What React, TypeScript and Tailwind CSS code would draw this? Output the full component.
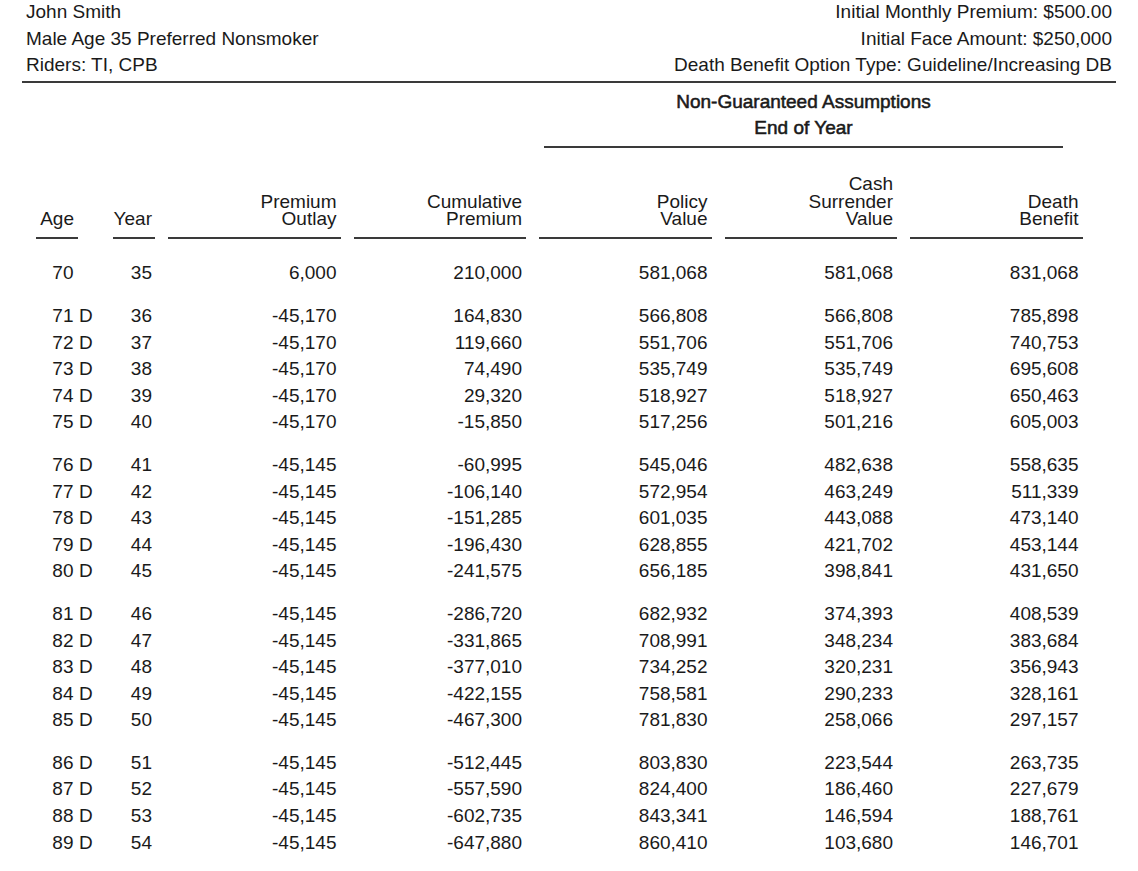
import React from "react";

type RowData = [string, boolean, string, string, string, string, string, string];

const firstRow: RowData = ["70", false, "35", "6,000", "210,000", "581,068", "581,068", "831,068"];

const groups: RowData[][] = [
  [
    ["71", true, "36", "-45,170", "164,830", "566,808", "566,808", "785,898"],
    ["72", true, "37", "-45,170", "119,660", "551,706", "551,706", "740,753"],
    ["73", true, "38", "-45,170", "74,490", "535,749", "535,749", "695,608"],
    ["74", true, "39", "-45,170", "29,320", "518,927", "518,927", "650,463"],
    ["75", true, "40", "-45,170", "-15,850", "517,256", "501,216", "605,003"],
  ],
  [
    ["76", true, "41", "-45,145", "-60,995", "545,046", "482,638", "558,635"],
    ["77", true, "42", "-45,145", "-106,140", "572,954", "463,249", "511,339"],
    ["78", true, "43", "-45,145", "-151,285", "601,035", "443,088", "473,140"],
    ["79", true, "44", "-45,145", "-196,430", "628,855", "421,702", "453,144"],
    ["80", true, "45", "-45,145", "-241,575", "656,185", "398,841", "431,650"],
  ],
  [
    ["81", true, "46", "-45,145", "-286,720", "682,932", "374,393", "408,539"],
    ["82", true, "47", "-45,145", "-331,865", "708,991", "348,234", "383,684"],
    ["83", true, "48", "-45,145", "-377,010", "734,252", "320,231", "356,943"],
    ["84", true, "49", "-45,145", "-422,155", "758,581", "290,233", "328,161"],
    ["85", true, "50", "-45,145", "-467,300", "781,830", "258,066", "297,157"],
  ],
  [
    ["86", true, "51", "-45,145", "-512,445", "803,830", "223,544", "263,735"],
    ["87", true, "52", "-45,145", "-557,590", "824,400", "186,460", "227,679"],
    ["88", true, "53", "-45,145", "-602,735", "843,341", "146,594", "188,761"],
    ["89", true, "54", "-45,145", "-647,880", "860,410", "103,680", "146,701"],
  ],
];

function DataRow({ r }: { r: RowData }) {
  return (
    <div className="flex h-[26.6px] leading-[26.6px] whitespace-nowrap">
      <div className="w-[42px] shrink-0 flex">
        <span className="inline-block w-[37.5px] text-right shrink-0">{r[0]}</span>
        {r[1] ? <span className="ml-[5.5px]">D</span> : null}
      </div>
      <div className="w-[42px] shrink-0 ml-[35px] text-right pr-[3px]">{r[2]}</div>
      <div className="w-[172.5px] shrink-0 ml-[13px] text-right pr-[4px]">{r[3]}</div>
      <div className="w-[172.5px] shrink-0 ml-[13px] text-right pr-[4px]">{r[4]}</div>
      <div className="w-[172.5px] shrink-0 ml-[13px] text-right pr-[4px]">{r[5]}</div>
      <div className="w-[172.5px] shrink-0 ml-[13px] text-right pr-[4px]">{r[6]}</div>
      <div className="w-[172.5px] shrink-0 ml-[13px] text-right pr-[4px]">{r[7]}</div>
    </div>
  );
}

function HeadCell({ lines, className }: { lines: string[]; className: string }) {
  return (
    <div
      className={
        "shrink-0 h-[91px] flex flex-col justify-end items-end pb-[10px] border-b-2 border-[#3a3a3a] leading-[17.3px] " +
        className
      }
    >
      {lines.map((l) => (
        <div key={l}>{l}</div>
      ))}
    </div>
  );
}

export default function App() {
  return (
    <div
      className="min-h-[871px] w-[1138px] bg-white text-[#1a1a1a] text-[19px]"
      style={{ fontFamily: '"Liberation Sans", Arial, sans-serif' }}
    >
      {/* Top header */}
      <div className="mx-[22px] px-[4px] pb-[4px] border-b-2 border-[#3a3a3a] flex justify-between">
        <div className="flex flex-col gap-[2.7px] leading-[24px]">
          <div>John Smith</div>
          <div>Male Age 35 Preferred Nonsmoker</div>
          <div>Riders: TI, CPB</div>
        </div>
        <div className="flex flex-col gap-[2.7px] leading-[24px] items-end">
          <div>Initial Monthly Premium: $500.00</div>
          <div>Initial Face Amount: $250,000</div>
          <div>Death Benefit Option Type: Guideline/Increasing DB</div>
        </div>
      </div>

      {/* Non-Guaranteed block */}
      <div className="ml-[544px] w-[519px] mt-[6px] pb-[5px] border-b-2 border-[#3a3a3a] text-center leading-[26px] [-webkit-text-stroke:0.55px_#1a1a1a]">
        <div>Non-Guaranteed Assumptions</div>
        <div>End of Year</div>
      </div>

      {/* Column headers */}
      <div className="flex pl-[36px]">
        <HeadCell lines={["Age"]} className="w-[42px] pr-[4px]" />
        <HeadCell lines={["Year"]} className="w-[42px] ml-[35px] pr-[3px]" />
        <HeadCell lines={["Premium", "Outlay"]} className="w-[172.5px] ml-[13px] pr-[4px]" />
        <HeadCell lines={["Cumulative", "Premium"]} className="w-[172.5px] ml-[13px] pr-[4px]" />
        <HeadCell lines={["Policy", "Value"]} className="w-[172.5px] ml-[13px] pr-[4px]" />
        <HeadCell lines={["Cash", "Surrender", "Value"]} className="w-[172.5px] ml-[13px] pr-[4px]" />
        <HeadCell lines={["Death", "Benefit"]} className="w-[172.5px] ml-[13px] pr-[4px]" />
      </div>

      {/* Data */}
      <div className="pl-[36px] mt-[21px] flex flex-col gap-[16px]">
        <div>
          <DataRow r={firstRow} />
        </div>
        {groups.map((g, i) => (
          <div key={i}>
            {g.map((r) => (
              <DataRow key={r[0]} r={r} />
            ))}
          </div>
        ))}
      </div>
    </div>
  );
}
